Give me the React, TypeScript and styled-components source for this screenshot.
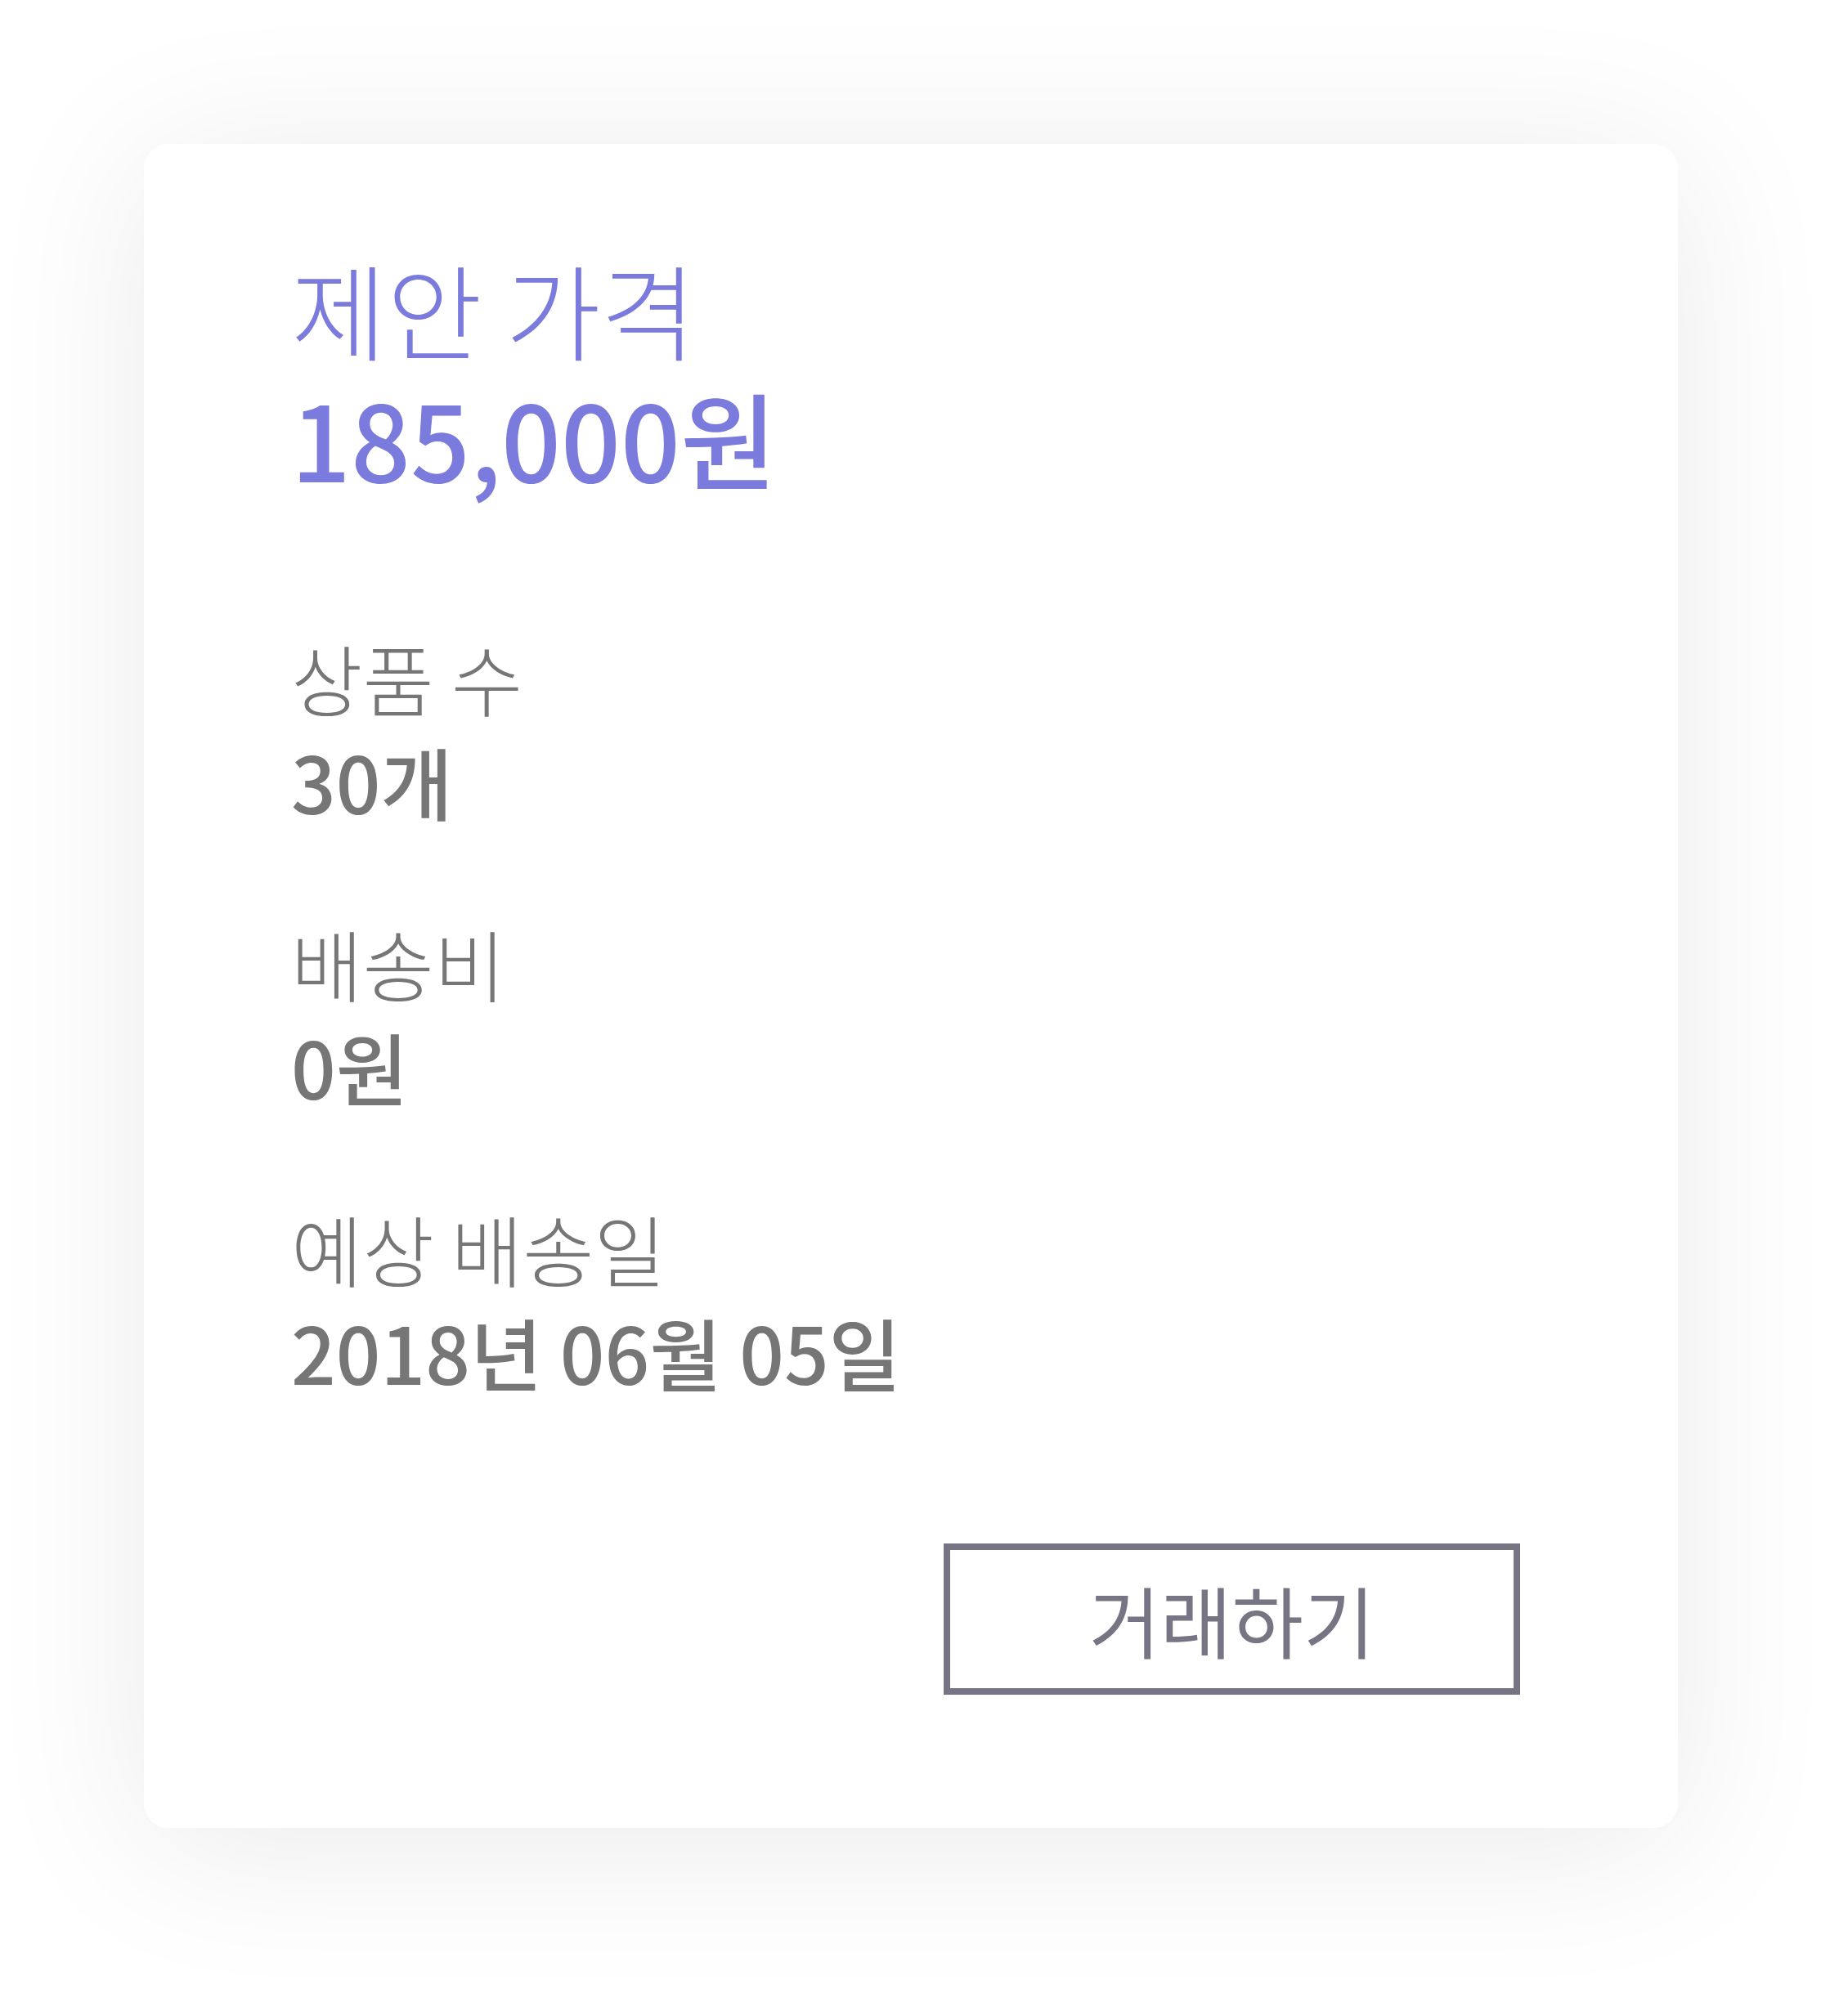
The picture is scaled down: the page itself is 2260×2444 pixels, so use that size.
import styled, { createGlobalStyle } from "styled-components";

const GlobalStyle = createGlobalStyle`
  html, body {
    margin: 0;
    padding: 0;
    background-color: #ffffff;
  }
  body {
    font-family: "Noto Sans CJK KR", "Noto Sans", sans-serif;
  }
`;

const Page = styled.div`
  padding: 176px 208px 207px 176px;
  box-sizing: border-box;
  width: 2260px;
`;

const Card = styled.div`
  width: 1876px;
  height: 2060px;
  box-sizing: border-box;
  background-color: #ffffff;
  border-radius: 30px;
  box-shadow: 0 20px 200px rgba(0, 0, 0, 0.085);
  padding: 121px 193px 163px 180px;
  display: flex;
  flex-direction: column;
`;

const Offer = styled.div`
  display: flex;
  flex-direction: column;
  gap: 3px;
`;

const OfferLabel = styled.div`
  font-size: 127px;
  line-height: 160px;
  font-weight: 300;
  color: #7b7bdd;
`;

const OfferPrice = styled.div`
  font-size: 128px;
  line-height: 150px;
  font-weight: 500;
  color: #7b7bdd;
`;

const Details = styled.div`
  display: flex;
  flex-direction: column;
  gap: 97px;
  margin-top: 155px;
`;

const Item = styled.div`
  display: flex;
  flex-direction: column;
`;

const Label = styled.div`
  font-size: 95px;
  line-height: 127px;
  font-weight: 300;
  color: #767676;
`;

const Value = styled.div`
  font-size: 96px;
  line-height: 125px;
  font-weight: 500;
  color: #767676;
`;

const Footer = styled.div`
  margin-top: auto;
  display: flex;
  justify-content: flex-end;
`;

const TradeButton = styled.button`
  width: 705px;
  height: 185px;
  box-sizing: border-box;
  border: 8px solid #777584;
  background-color: #ffffff;
  color: #777584;
  font-family: "Noto Sans CJK KR", "Noto Sans", sans-serif;
  font-size: 95px;
  font-weight: 400;
  line-height: 1;
  padding: 0;
  cursor: pointer;
  display: flex;
  align-items: center;
  justify-content: center;
`;

const details = [
  { label: "상품 수", value: "30개" },
  { label: "배송비", value: "0원" },
  { label: "예상 배송일", value: "2018년 06월 05일" },
];

function App() {
  return (
    <Page>
      <GlobalStyle />
      <Card>
        <Offer>
          <OfferLabel>제안 가격</OfferLabel>
          <OfferPrice>185,000원</OfferPrice>
        </Offer>
        <Details>
          {details.map((d) => (
            <Item key={d.label}>
              <Label>{d.label}</Label>
              <Value>{d.value}</Value>
            </Item>
          ))}
        </Details>
        <Footer>
          <TradeButton>거래하기</TradeButton>
        </Footer>
      </Card>
    </Page>
  );
}

export default App;
